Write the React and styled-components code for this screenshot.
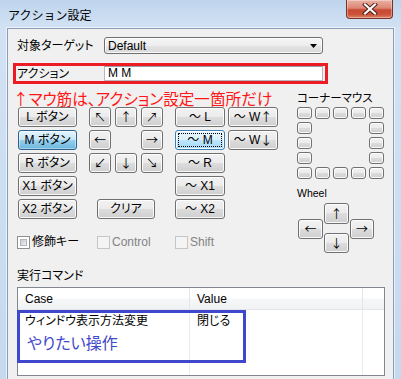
import React from 'react';
import styled, { createGlobalStyle, css } from 'styled-components';

const GlobalStyle = createGlobalStyle`
  html, body { margin: 0; padding: 0; width: 401px; height: 379px; overflow: hidden; background: #fff; }
  body {
    font-family: "Liberation Sans", "Noto Sans CJK JP", sans-serif;
    font-size: 12px; color: #000;
    font-feature-settings: "palt";
  }
  #root { width: 401px; height: 379px; }
`;

const Window = styled.div`
  width: 401px; height: 379px; box-sizing: border-box;
  display: flex; flex-direction: column;
  background: linear-gradient(180deg, #bed4ed 0px, #d2e2f4 28px, #c5d9ef 100%);
`;

const TitleBar = styled.div`
  height: 28px; flex: none; display: flex; align-items: flex-start;
`;

const Title = styled.div`
  margin: 7px 0 0 8px; font-size: 12px; line-height: 15px;
  font-family: "Noto Sans CJK JP", sans-serif; font-feature-settings: normal;
`;

const CloseBtn = styled.div`
  margin: 0 8px 0 auto; width: 47px; height: 19px; box-sizing: border-box;
  border: 1px solid #7a3228; border-top: none; border-radius: 0 0 4px 4px;
  background: linear-gradient(180deg, #eab1a3 0%, #dd8673 45%, #c84a33 55%, #cc5238 80%, #dc8466 100%);
  box-shadow: inset 0 0 0 1px rgba(255,255,255,0.35);
  display: flex; align-items: center; justify-content: center;
`;

const Client = styled.div`
  flex: 1; min-height: 0; margin: 0 7px;
  border: 1px solid #8b9db6; border-bottom: none;
  box-shadow: 0 0 0 1px rgba(255,255,255,0.6);
  background: #f0f0f0;
  display: flex; flex-direction: column;
`;

const TargetRow = styled.div`
  display: flex; align-items: center; height: 17px; margin: 8px 0 0 9px;
`;

const FieldLabel = styled.div`
  width: 87px; flex: none; font-size: 12px; line-height: 16px; white-space: nowrap;
`;

const Select = styled.div`
  width: 219px; height: 17px; box-sizing: border-box; flex: none;
  display: flex; align-items: center; justify-content: space-between;
  padding: 0 5px 0 3px;
  border: 1px solid #707070; border-radius: 3px;
  background: linear-gradient(180deg, #f5f5f5 0%, #eeeeee 50%, #e4e4e4 50%, #d9d9d9 100%);
  box-shadow: inset 0 0 0 1px rgba(255,255,255,0.8);
  font-size: 12px; line-height: 14px;
`;

const ActionBox = styled.div`
  display: flex; align-items: center; box-sizing: border-box;
  width: 315px; height: 21px; margin: 9px 0 0 5px; padding-left: 1px;
  border: 3px solid #ed1c24;
`;

const TextBox = styled.div`
  width: 219px; height: 15px; box-sizing: border-box; flex: none;
  background: #fff; border: 1px solid #b5b8c0; border-top-color: #9a9ca3;
  display: flex; align-items: center; padding-left: 3px;
  font-size: 12px; line-height: 13px;
`;

const Main = styled.div`
  display: flex; margin-top: 5px;
`;

const LeftPane = styled.div`
  width: 289px; flex: none; display: flex; flex-direction: column;
`;

const Note = styled.div`
  height: 18px; padding-left: 5px; white-space: nowrap;
  font-family: "Noto Sans CJK JP", sans-serif;
  font-size: 15.6px; line-height: 18px; color: #ff1616;
`;

const ButtonArea = styled.div`
  display: flex; gap: 12px; margin: 0 0 0 10px;
`;

const Column = styled.div`
  display: grid; grid-template-rows: repeat(5, 20px); row-gap: 3px;
  grid-template-columns: ${p => p.$cols};
  column-gap: ${p => p.$gap || 0}px;
`;

const Btn = styled.div`
  box-sizing: border-box; height: 20px; position: relative;
  display: flex; align-items: center; justify-content: center;
  border: 1px solid #707070; border-radius: 3px;
  background: linear-gradient(180deg, #f2f2f2 0%, #ebebeb 50%, #dddddd 50%, #cfcfcf 100%);
  box-shadow: inset 0 0 0 1px rgba(255,255,255,0.85);
  font-size: 12px; line-height: 14px; white-space: nowrap;
  ${p => p.$span && css`grid-column: 1 / -1; justify-self: center; width: ${p.$span}px;`}
  ${p => p.$pressed && css`
    border-color: #2c628b;
    background: linear-gradient(180deg, #e5f4fc 0%, #c4e5f6 50%, #98d1ef 50%, #6cb6dd 100%);
    box-shadow: inset 0 0 0 1px rgba(255,255,255,0.4);
  `}
  ${p => p.$focus && css`
    border-color: #3c7fb1;
    background: linear-gradient(180deg, #eaf6fd 0%, #d9f0fc 50%, #bee6fd 50%, #a7d9f5 100%);
    &::after {
      content: ""; position: absolute; inset: 2px; border: 1px dotted #000;
    }
  `}
`;

const Arrow = styled.span`
  font-family: "Noto Sans CJK JP", sans-serif; font-size: 12px; color: #000;
  font-variant-emoji: text; font-feature-settings: normal;
`;

const CheckRow = styled.div`
  display: flex; margin: 17px 0 0 9px; height: 13px; align-items: center;
`;

const CheckItem = styled.div`
  width: ${p => p.$w}px; flex: none; display: flex; align-items: center; gap: 2px;
  font-size: 12px; line-height: 13px; white-space: nowrap;
  color: ${p => (p.$disabled ? '#838383' : '#000')};
`;

const Box = styled.div`
  width: 13px; height: 13px; box-sizing: border-box; flex: none;
  border: 1px solid ${p => (p.$disabled ? '#c5c5c5' : '#8e8f8f')};
  background: ${p => (p.$disabled ? '#f4f4f4' : '#fff')};
  padding: 2px;
  &::before {
    content: ""; display: block; width: 100%; height: 100%;
    background: ${p => (p.$disabled ? 'transparent' : 'linear-gradient(135deg, #c6cbd2, #eceef1)')};
    border: ${p => (p.$disabled ? 'none' : '1px solid #b2b5ba')};
    box-sizing: border-box;
  }
`;

const RightPane = styled.div`
  width: 88px; flex: none; display: flex; flex-direction: column;
`;

const CornerLabel = styled.div`
  height: 18px; line-height: 18px; font-size: 11.5px; white-space: nowrap;
`;

const CornerGrid = styled.div`
  display: grid; grid-template-columns: repeat(5, 15px); grid-template-rows: repeat(5, 12px);
  gap: 3px;
`;

const Mini = styled.div`
  box-sizing: border-box; border: 1px solid #707070; border-radius: 3px;
  background: linear-gradient(180deg, #f2f2f2 0%, #ebebeb 50%, #dddddd 50%, #cfcfcf 100%);
  box-shadow: inset 0 0 0 1px rgba(255,255,255,0.85);
`;

const WheelLabel = styled.div`
  margin-top: 6px; height: 16px; line-height: 16px; font-size: 10.5px;
`;

const WheelPad = styled.div`
  margin: 2px 0 0 1px;
  display: grid;
  grid-template-columns: 25px 25px 24px;
  grid-template-rows: 16px 5px 9px 6px 14px;
  column-gap: 1px;
`;

const PadBtn = styled(Btn)`
  height: auto; grid-column: ${p => p.$col}; grid-row: ${p => p.$row};
`;

const CmdLabel = styled.div`
  margin: 15px 0 0 9px; height: 16px; line-height: 16px; font-size: 12px;
`;

const ListView = styled.div`
  position: relative; box-sizing: border-box;
  width: 368px; height: 89px; margin: 3px 0 0 9px; flex: none;
  border: 1px solid #828790; background: #fff;
  display: flex; flex-direction: column;
`;

const Header = styled.div`
  display: flex; height: 22px; flex: none; box-sizing: border-box;
  background: linear-gradient(180deg, #ffffff 0%, #ffffff 48%, #f6f7f8 52%, #f1f2f4 100%);
  border-bottom: 1px solid #e4e6ea;
`;

const HeadCell = styled.div`
  width: ${p => p.$w}px; flex: none; box-sizing: border-box;
  padding-left: 7px; display: flex; align-items: center;
  border-right: 1px solid #e2e6ec; font-size: 12px;
`;

const Body = styled.div`
  flex: 1; display: flex;
`;

const BodyCol = styled.div`
  width: ${p => p.$w}px; flex: none; box-sizing: border-box;
  border-right: 1px solid #e6edf7;
`;

const Cell = styled.div`
  height: 19px; padding-left: 7px; display: flex; align-items: center;
  font-size: 12px; white-space: nowrap;
`;

const BlueBox = styled.div`
  position: absolute; left: -1px; top: 22px;
  width: 229px; height: 53px; box-sizing: border-box;
  border: 3px solid #3f48cc;
  padding: 21px 0 0 7px;
`;

const BlueText = styled.div`
  font-family: "Noto Sans CJK JP", sans-serif;
  font-size: 16px; line-height: 16px; color: #3f48cc; white-space: nowrap;
`;

const DropArrow = () => (
  <svg width="7" height="4" viewBox="0 0 7 4"><path d="M0 0h7L3.5 4z" fill="#000" /></svg>
);

const CloseIcon = () => (
  <svg width="16" height="12" viewBox="0 0 16 12">
    <path d="M3 1.5l10 9M13 1.5l-10 9" stroke="#4a1a14" strokeWidth="4" strokeLinecap="square" />
    <path d="M3 1.5l10 9M13 1.5l-10 9" stroke="#fff" strokeWidth="2.2" strokeLinecap="square" />
  </svg>
);

const cornerCells = Array.from({ length: 25 }, (_, i) => {
  const r = Math.floor(i / 5), c = i % 5;
  return r === 0 || r === 4 || c === 0 || c === 4;
});

const T = '\uFE0E';

export default function App() {
  return (
    <>
      <GlobalStyle />
      <Window>
        <TitleBar>
          <Title>アクション設定</Title>
          <CloseBtn><CloseIcon /></CloseBtn>
        </TitleBar>
        <Client>
          <TargetRow>
            <FieldLabel>対象ターゲット</FieldLabel>
            <Select><span>Default</span><DropArrow /></Select>
          </TargetRow>
          <ActionBox>
            <FieldLabel>アクション</FieldLabel>
            <TextBox>M M</TextBox>
          </ActionBox>
          <Main>
            <LeftPane>
              <Note>↑マウ筋は、アクション設定一箇所だけ</Note>
              <ButtonArea>
                <Column $cols="59px">
                  <Btn>L ボタン</Btn>
                  <Btn $pressed>M ボタン</Btn>
                  <Btn>R ボタン</Btn>
                  <Btn>X1 ボタン</Btn>
                  <Btn>X2 ボタン</Btn>
                </Column>
                <Column $cols="22px 22px 22px" $gap={4}>
                  <Btn><Arrow>{'↖' + T}</Arrow></Btn>
                  <Btn><Arrow>{'↑' + T}</Arrow></Btn>
                  <Btn><Arrow>{'↗' + T}</Arrow></Btn>
                  <Btn><Arrow>{'←' + T}</Arrow></Btn>
                  <span />
                  <Btn><Arrow>{'→' + T}</Arrow></Btn>
                  <Btn><Arrow>{'↙' + T}</Arrow></Btn>
                  <Btn><Arrow>{'↓' + T}</Arrow></Btn>
                  <Btn><Arrow>{'↘' + T}</Arrow></Btn>
                  <span /><span /><span />
                  <Btn $span={58}>クリア</Btn>
                </Column>
                <Column $cols="50px 50px" $gap={3}>
                  <Btn>～ L</Btn>
                  <Btn>～ W<Arrow>{'↑' + T}</Arrow></Btn>
                  <Btn $focus>～ M</Btn>
                  <Btn>～ W<Arrow>{'↓' + T}</Arrow></Btn>
                  <Btn>～ R</Btn>
                  <span />
                  <Btn>～ X1</Btn>
                  <span />
                  <Btn>～ X2</Btn>
                  <span />
                </Column>
              </ButtonArea>
              <CheckRow>
                <CheckItem $w={80}><Box />修飾キー</CheckItem>
                <CheckItem $w={78} $disabled><Box $disabled />Control</CheckItem>
                <CheckItem $w={60} $disabled><Box $disabled />Shift</CheckItem>
              </CheckRow>
            </LeftPane>
            <RightPane>
              <CornerLabel>コーナーマウス</CornerLabel>
              <CornerGrid>
                {cornerCells.map((on, i) => (on ? <Mini key={i} /> : <span key={i} />))}
              </CornerGrid>
              <WheelLabel>Wheel</WheelLabel>
              <WheelPad>
                <PadBtn $col="2" $row="1 / 3"><Arrow>{'↑' + T}</Arrow></PadBtn>
                <PadBtn $col="1" $row="2 / 5"><Arrow>{'←' + T}</Arrow></PadBtn>
                <PadBtn $col="3" $row="2 / 5"><Arrow>{'→' + T}</Arrow></PadBtn>
                <PadBtn $col="2" $row="4 / 6"><Arrow>{'↓' + T}</Arrow></PadBtn>
              </WheelPad>
            </RightPane>
          </Main>
          <CmdLabel>実行コマンド</CmdLabel>
          <ListView>
            <Header>
              <HeadCell $w={172}>Case</HeadCell>
              <HeadCell $w={173}>Value</HeadCell>
            </Header>
            <Body>
              <BodyCol $w={172}><Cell>ウィンドウ表示方法変更</Cell></BodyCol>
              <BodyCol $w={173}><Cell>閉じる</Cell></BodyCol>
            </Body>
            <BlueBox><BlueText>やりたい操作</BlueText></BlueBox>
          </ListView>
        </Client>
      </Window>
    </>
  );
}
